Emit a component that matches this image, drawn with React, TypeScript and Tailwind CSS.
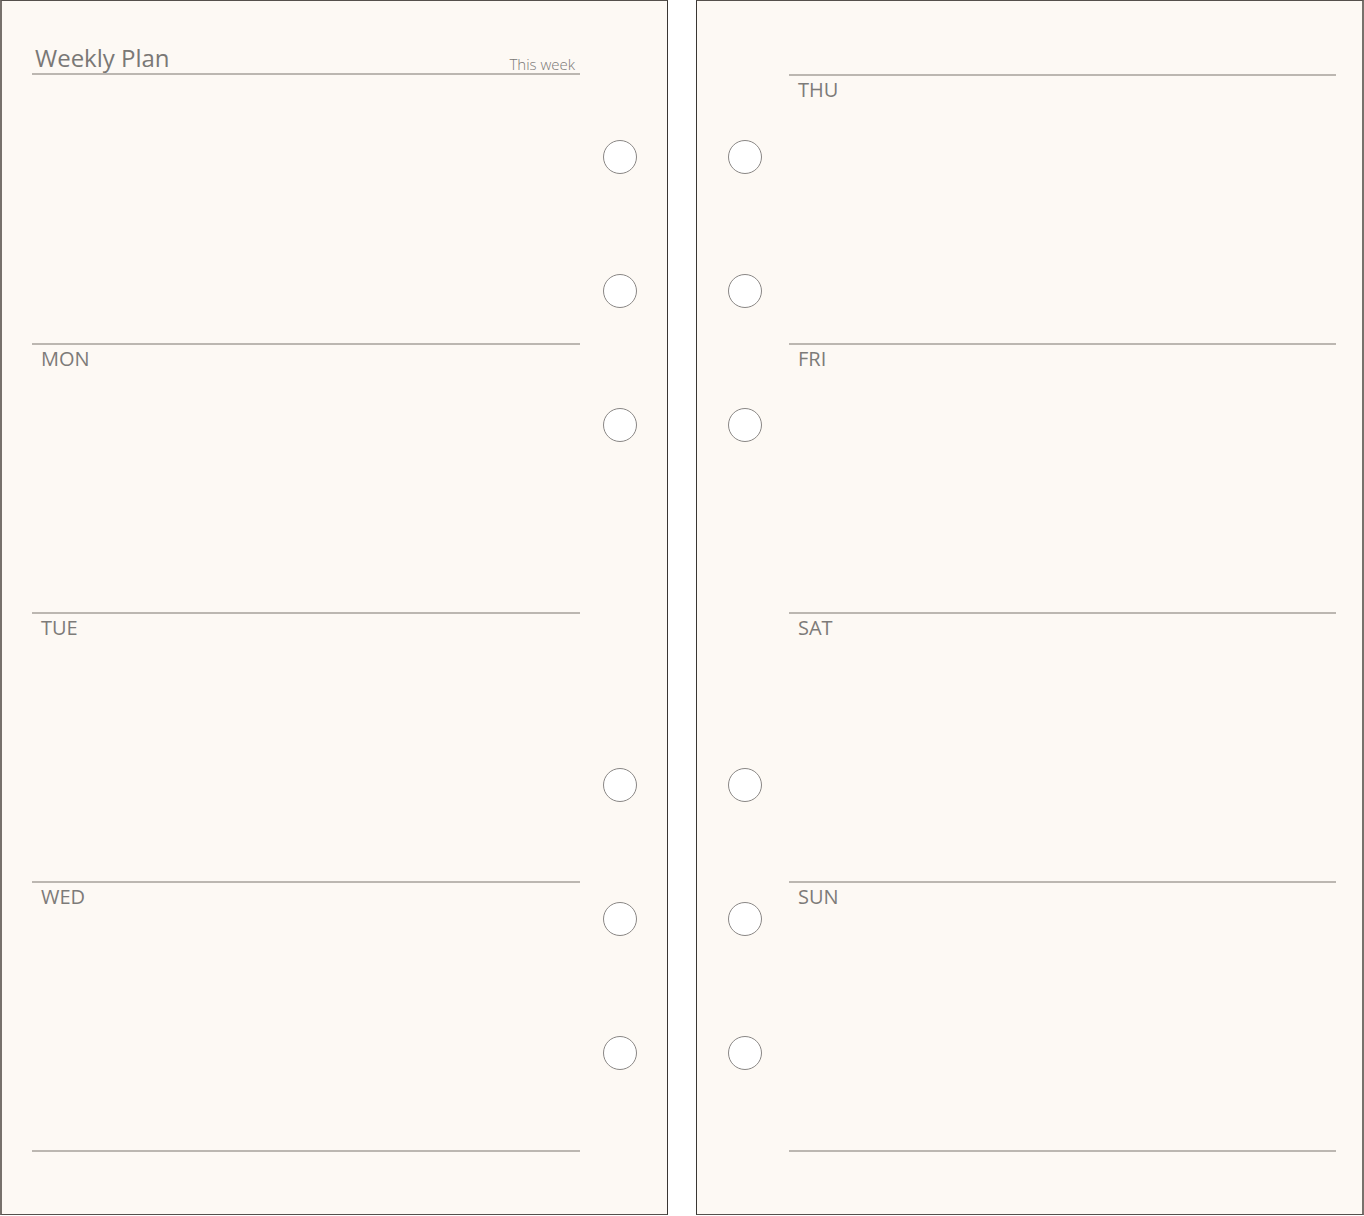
const font = "font-['Open_Sans','Noto_Sans',sans-serif]"

function Rings() {
  return (
    <div className="flex flex-col">
      {[139, 100, 100, 326, 100, 100].map((m, i) => (
        <div
          key={i}
          style={{ marginTop: m }}
          className="w-[34px] h-[34px] rounded-full bg-white border border-[#8a8785]"
        />
      ))}
    </div>
  )
}

function DayBlock({ label }: { label?: string }) {
  return (
    <div className="h-[269px] border-t-2 border-[#bcb7b1]">
      {label && (
        <div className="pl-[9px] pt-[2px] text-[20px] leading-[24px] text-[#7d7b79]">{label}</div>
      )}
    </div>
  )
}

export default function App() {
  return (
    <div className={`flex w-[1364px] h-[1216px] bg-white ${font}`}>
      {/* Left page */}
      <div className="flex w-[668px] h-[1215px] bg-[#fdf9f4] border-l-2 border-l-[#77716c] border-t border-t-[#55504c] border-r border-r-[#3a3633] border-b border-b-[#55504c]">
        <div className="ml-[30px] w-[548px] flex flex-col">
          <div className="h-[74px] flex items-end justify-between border-b-2 border-[#bcb7b1] pl-[3px] pr-[5px]">
            <span className="text-[24px] leading-none pb-[3px] text-[#7a7876]">Weekly Plan</span>
            <span className="text-[15px] font-light leading-none pb-[1px] text-[#7a7876]">This week</span>
          </div>
          <div className="h-[268px]" />
          <DayBlock label="MON" />
          <DayBlock label="TUE" />
          <DayBlock label="WED" />
          <div className="border-t-2 border-[#bcb7b1]" />
        </div>
        <div className="ml-[23px]">
          <Rings />
        </div>
      </div>

      {/* Right page */}
      <div className="ml-[28px] flex w-[668px] h-[1215px] bg-[#fdf9f4] border-l border-l-[#3a3633] border-t border-t-[#55504c] border-r-2 border-r-[#77716c] border-b border-b-[#55504c]">
        <div className="ml-[31px]">
          <Rings />
        </div>
        <div className="ml-[27px] w-[547px] flex flex-col pt-[73px]">
          <DayBlock label="THU" />
          <DayBlock label="FRI" />
          <DayBlock label="SAT" />
          <DayBlock label="SUN" />
          <div className="border-t-2 border-[#bcb7b1]" />
        </div>
      </div>
    </div>
  )
}
